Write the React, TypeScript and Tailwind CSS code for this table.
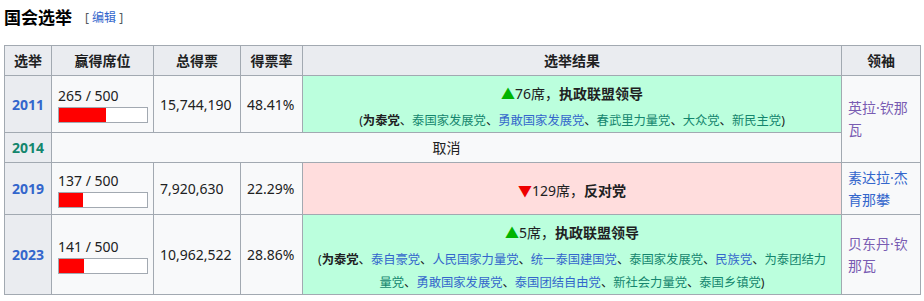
type Party = { name: string; c: 'g' | 'b' };

const linkColor = {
  g: 'text-[#14866d]',
  b: 'text-[#3366cc]',
};

const rows2011: Party[] = [
  { name: '泰国家发展党', c: 'g' },
  { name: '勇敢国家发展党', c: 'b' },
  { name: '春武里力量党', c: 'g' },
  { name: '大众党', c: 'g' },
  { name: '新民主党', c: 'g' },
];

const rows2023: Party[] = [
  { name: '泰自豪党', c: 'b' },
  { name: '人民国家力量党', c: 'b' },
  { name: '统一泰国建国党', c: 'b' },
  { name: '泰国家发展党', c: 'g' },
  { name: '民族党', c: 'b' },
  { name: '为泰团结力量党', c: 'g' },
  { name: '勇敢国家发展党', c: 'b' },
  { name: '泰国团结自由党', c: 'b' },
  { name: '新社会力量党', c: 'g' },
  { name: '泰国乡镇党', c: 'g' },
];

function Seats({ won }: { won: number }) {
  return (
    <div>
      <div className="leading-[22px]">{won} / 500</div>
      <div className="w-[90px] h-[16px] border border-[#a2a9b1] bg-white">
        <div className="h-full bg-[#ff0000]" style={{ width: `${(won / 500) * 88}px` }} />
      </div>
    </div>
  );
}

function Arrow({ up }: { up: boolean }) {
  return (
    <span
      className={up ? 'text-[#00b400]' : 'text-[#ee0000]'}
      style={{ fontFamily: '"Noto Sans CJK SC", sans-serif' }}
    >
      {up ? '▲' : '▼'}
    </span>
  );
}

function Coalition({ parties }: { parties: Party[] }) {
  return (
    <div className="mt-[3px] text-[12.3px] leading-[23px]">
      (<b>为泰党</b>
      {parties.map(p => (
        <span key={p.name}>
          、<a className={linkColor[p.c]}>{p.name}</a>
        </span>
      ))}
      )
    </div>
  );
}

const th = 'border border-[#a2a9b1] bg-[#eaecf0] font-bold text-center px-[6px] py-[3px]';
const td = 'border border-[#a2a9b1] bg-[#f8f9fa] px-[6px] py-[3px] align-middle';
const yearCell = 'border border-[#a2a9b1] bg-[#eaecf0] font-bold text-center px-[4px] py-[3px]';
const result = 'border border-[#a2a9b1] text-center px-[10px] pt-[4px] pb-0 align-middle';
const leader = 'border border-[#a2a9b1] bg-[#f8f9fa] px-[6px] py-[3px] leading-[22px] align-middle';

export default function App() {
  return (
    <div
      className="bg-white w-[924px] h-[301px] px-[4px] pt-[7px] text-[#202122] text-[14px]"
      style={{ fontFamily: '"Noto Sans", "Noto Sans CJK SC", sans-serif' }}
    >
      <div className="flex items-center h-[22px]">
        <h3 className="text-[17px] font-bold leading-[22px] text-black">国会选举</h3>
        <span className="ml-[13px] text-[12px] text-[#54595d]">
          [ <a className="text-[#3366cc]">编辑</a> ]
        </span>
      </div>

      <table className="mt-[16px] table-fixed border-collapse w-[916px]">
        <colgroup>
          <col className="w-[47px]" />
          <col className="w-[102px]" />
          <col className="w-[87px]" />
          <col className="w-[62px]" />
          <col className="w-[539px]" />
          <col className="w-[79px]" />
        </colgroup>
        <thead>
          <tr className="h-[30px]">
            <th className={th}>选举</th>
            <th className={th}>赢得席位</th>
            <th className={th}>总得票</th>
            <th className={th}>得票率</th>
            <th className={th}>选举结果</th>
            <th className={th}>领袖</th>
          </tr>
        </thead>
        <tbody>
          <tr className="h-[57px]">
            <td className={yearCell}>
              <a className="text-[#3366cc]">2011</a>
            </td>
            <td className={td}>
              <Seats won={265} />
            </td>
            <td className={td}>15,744,190</td>
            <td className={td}>48.41%</td>
            <td className={`${result} bg-[#bbffdd]`}>
              <div className="leading-[24px]">
                <Arrow up />76席，<b>执政联盟领导</b>
              </div>
              <Coalition parties={rows2011} />
            </td>
            <td className={leader} rowSpan={2}>
              <a className="text-[#795cb2]">英拉·钦那瓦</a>
            </td>
          </tr>
          <tr className="h-[30px]">
            <td className={yearCell}>
              <a className="text-[#14866d]">2014</a>
            </td>
            <td className={`${td} text-center`} colSpan={4}>
              取消
            </td>
          </tr>
          <tr className="h-[52px]">
            <td className={yearCell}>
              <a className="text-[#3366cc]">2019</a>
            </td>
            <td className={td}>
              <Seats won={137} />
            </td>
            <td className={td}>7,920,630</td>
            <td className={td}>22.29%</td>
            <td className={`${result} bg-[#ffdddd]`}>
              <div className="leading-[24px]">
                <Arrow up={false} />129席，<b>反对党</b>
              </div>
            </td>
            <td className={leader}>
              <a className="text-[#3366cc]">素达拉·杰育那攀</a>
            </td>
          </tr>
          <tr className="h-[80px]">
            <td className={yearCell}>
              <a className="text-[#3366cc]">2023</a>
            </td>
            <td className={td}>
              <Seats won={141} />
            </td>
            <td className={td}>10,962,522</td>
            <td className={td}>28.86%</td>
            <td className={`${result} bg-[#bbffdd]`}>
              <div className="leading-[24px]">
                <Arrow up />5席，<b>执政联盟领导</b>
              </div>
              <Coalition parties={rows2023} />
            </td>
            <td className={leader}>
              <a className="text-[#795cb2]">贝东丹·钦那瓦</a>
            </td>
          </tr>
        </tbody>
      </table>
    </div>
  );
}
